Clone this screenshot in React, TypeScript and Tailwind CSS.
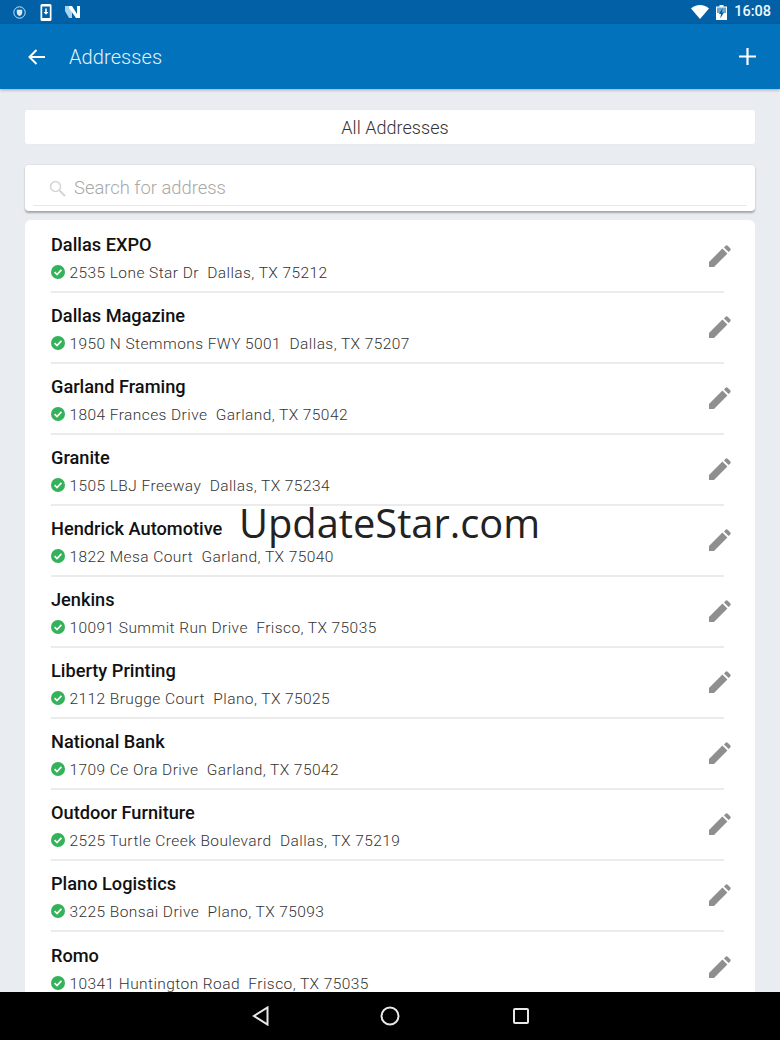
import React from "react";

const rows = [
  ["Dallas EXPO", "2535 Lone Star Dr  Dallas, TX 75212"],
  ["Dallas Magazine", "1950 N Stemmons FWY 5001  Dallas, TX 75207"],
  ["Garland Framing", "1804 Frances Drive  Garland, TX 75042"],
  ["Granite", "1505 LBJ Freeway  Dallas, TX 75234"],
  ["Hendrick Automotive", "1822 Mesa Court  Garland, TX 75040"],
  ["Jenkins", "10091 Summit Run Drive  Frisco, TX 75035"],
  ["Liberty Printing", "2112 Brugge Court  Plano, TX 75025"],
  ["National Bank", "1709 Ce Ora Drive  Garland, TX 75042"],
  ["Outdoor Furniture", "2525 Turtle Creek Boulevard  Dallas, TX 75219"],
  ["Plano Logistics", "3225 Bonsai Drive  Plano, TX 75093"],
  ["Romo", "10341 Huntington Road  Frisco, TX 75035"],
];

function Check() {
  return (
    <svg width="14" height="14" viewBox="0 0 14 14" className="shrink-0 -mt-[2px] -ml-[0.5px]">
      <circle cx="7" cy="7" r="7" fill="#34b25a" />
      <path d="M3.6 7.2 6 9.5 10.4 4.9" fill="none" stroke="#fff" strokeWidth="1.7" />
    </svg>
  );
}

function Pencil() {
  return (
    <svg width="22" height="22" viewBox="0 0 22 22" className="shrink-0">
      <path d="M0 22v-5L13.400 3.600l5 5L5 22z" fill="#8f8f8f" />
      <path d="M15 2.400 16.600.8a1.500 1.500 0 0 1 2.100 0l2.500 2.500a1.500 1.500 0 0 1 0 2.100l-1.600 1.600z" fill="#8f8f8f" />
    </svg>
  );
}

export default function App() {
  return (
    <div className="relative w-[780px] h-[1040px] flex flex-col overflow-hidden bg-[#e9ecf1] font-['Roboto',sans-serif]">
      {/* status bar */}
      <div className="h-6 shrink-0 bg-[#0261a6] flex items-center pl-[13px] pr-[9px] text-white">
        <svg width="13" height="13" viewBox="0 0 13 13" className="mr-[14px]">
          <circle cx="6.500" cy="6.500" r="5.700" fill="none" stroke="#cfe2f1" strokeWidth="1" />
          <path d="M3.800 3.800h5.400v3c0 1.600-1.200 2.600-2.700 3.200-1.500-.6-2.700-1.600-2.700-3.200z" fill="#dbe9f5" />
        </svg>
        <svg width="12" height="17" viewBox="0 0 12 17" className="mr-[13px]">
          <rect x="0.500" y="0" width="11" height="17" rx="1.500" fill="#fff" />
          <rect x="2.200" y="2.500" width="7.600" height="11.500" fill="#0261a6" />
          <path d="M5.200 4.500h1.600v3.500h1.700L6 10.800 3.500 8h1.700z" fill="#fff" />
        </svg>
        <svg width="15" height="14" viewBox="0 0 15 14">
          <path d="M0 1h4l3 5v7H4L0 6z" fill="#a9d3ef" />
          <path d="M4 1h3l5 8V1h3v12h-4L4 3z" fill="#fff" />
        </svg>
        <div className="ml-auto flex items-center">
          <svg width="18" height="14" viewBox="0 0 18 14" className="mr-[7px]">
            <path d="M0 3.500C2.300 1.500 5.500 0 9 0s6.700 1.500 9 3.500L9 14z" fill="#fff" />
          </svg>
          <svg width="11" height="15" viewBox="0 0 11 15" className="mr-[7px]">
            <path d="M3.500 0h4v1.500H11V15H0V1.500h3.500z" fill="#fff" />
            <path d="M1 2.500h9V8H1z" fill="#6ea6d2" />
            <path d="M6.500 3 3 9h2l-.8 4.500L8 7.500H6z" fill="#0261a6" />
          </svg>
          <span className="text-[14.500px] font-medium leading-none text-[#f2f7fb]">16:08</span>
        </div>
      </div>

      {/* app bar */}
      <div className="h-[65px] shrink-0 bg-[#0172bb] flex items-center shadow-[0_1px_3px_rgba(0,0,0,0.3)] relative z-10 pl-7 pr-[24px] text-white">
        <svg width="18" height="16" viewBox="0 0 18 16" className="mr-[23px]">
          <path d="M17 8H2M8.500 1 1.500 8l7 7" fill="none" stroke="#fff" strokeWidth="2" />
        </svg>
        <span className="text-[20px] font-light text-[#e6f1f9] tracking-[0.1px]">Addresses</span>
        <svg width="17" height="17" viewBox="0 0 17 17" className="ml-auto">
          <path d="M8.500 0v17M0 8.500h17" stroke="#fff" strokeWidth="2.200" />
        </svg>
      </div>

      {/* content */}
      <div className="flex-1 min-h-0 flex flex-col px-[25px] pt-[21px]">
        <div className="h-[34px] shrink-0 bg-white rounded-[2px] flex items-center justify-center pl-[10px] text-[18px] tracking-[0.05px] font-light text-[#333] shadow-[0_0_1px_rgba(0,0,0,0.08)]">
          All Addresses
        </div>

        <div className="mt-[20px] h-[47px] shrink-0 bg-white rounded-[4px] border-t border-[#dfe2e6] shadow-[0_2px_2px_rgba(0,0,0,0.3)] px-2 pb-[5px] flex">
          <div className="flex-1 flex items-center border-b border-[#e6e8eb] pl-[16px] pt-[6px]">
            <svg width="17" height="17" viewBox="0 0 17 17" className="mr-[8px] shrink-0">
              <circle cx="6.500" cy="6.500" r="5" fill="none" stroke="#d4d4d4" strokeWidth="1.500" />
              <path d="M10.500 10.500 16 16" stroke="#d4d4d4" strokeWidth="2" />
            </svg>
            <span className="text-[18.400px] font-light text-[#a8a8a8]">Search for address</span>
          </div>
        </div>

        <div className="mt-[9px] flex-1 min-h-0 bg-white rounded-t-[6px] overflow-hidden pl-[26px] pr-[31px] pt-[2px]">
          {rows.map(([name, addr]) => (
            <div key={name} className="h-[71px] flex items-center border-b-2 border-[#ebebeb] last:border-b-0">
              <div className="flex-1 min-w-0 pt-[4px]">
                <div className="text-[18.200px] font-medium leading-[21px] text-[#111]">{name}</div>
                <div className="mt-[8px] flex items-center">
                  <Check />
                  <span className="ml-[5px] text-[15.500px] font-light leading-[20px] tracking-[0.42px] text-[#333] whitespace-pre">{addr}</span>
                </div>
              </div>
              <div className="-mr-[7px] mb-[2px]">
                <Pencil />
              </div>
            </div>
          ))}
        </div>
      </div>

      {/* nav bar */}
      <div className="h-[48px] shrink-0 bg-black flex items-center justify-center gap-[114px] relative z-10 pl-[1px]">
        <svg width="18" height="20" viewBox="0 0 18 20" className="-mr-[4px]">
          <path d="M15.500 1.500v17L2 10z" fill="none" stroke="#e8e8e8" strokeWidth="2" />
        </svg>
        <svg width="20" height="20" viewBox="0 0 20 20">
          <circle cx="10" cy="10" r="8.500" fill="none" stroke="#e8e8e8" strokeWidth="2" />
        </svg>
        <svg width="18" height="18" viewBox="0 0 18 18" className="-ml-[2px]">
          <rect x="2" y="2" width="14" height="14" rx="1" fill="none" stroke="#e8e8e8" strokeWidth="2" />
        </svg>
      </div>

      {/* watermark */}
      <div className="absolute left-[239px] top-[498px] z-20 text-[39.800px] leading-[50px] text-[#222] font-['Open_Sans',sans-serif]">
        UpdateStar.com
      </div>
    </div>
  );
}
